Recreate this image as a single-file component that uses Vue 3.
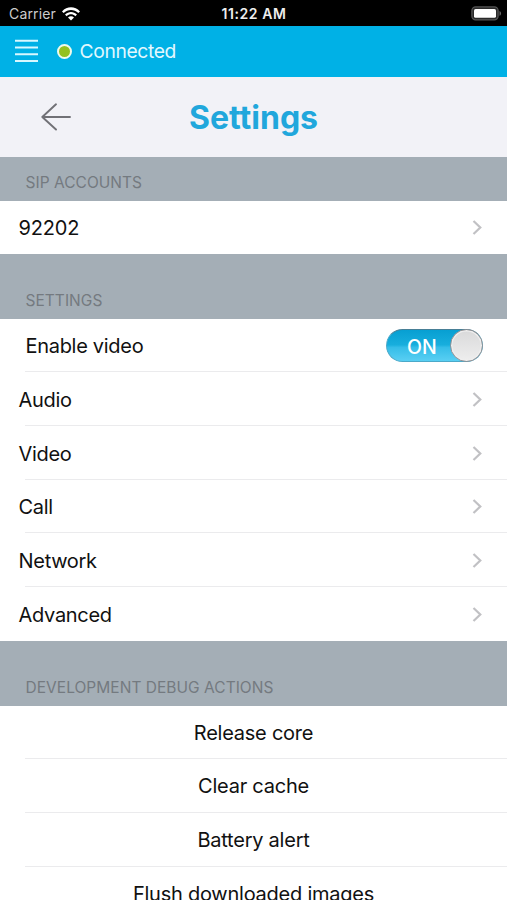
<script setup>
import { ref } from 'vue'

const videoEnabled = ref(true)
const accounts = ['92202']
const sections = ['Audio', 'Video', 'Call', 'Network', 'Advanced']
const actions = ['Release core', 'Clear cache', 'Battery alert', 'Flush downloaded images']
</script>

<template>
  <main class="phone">
    <div class="status">
      <div class="carrier">
        <span>Carrier</span>
        <svg class="wifi" width="18" height="14" viewBox="0 0 18 14">
          <path d="M0 4.4C5-1.2 13-1.2 18 4.4L16.3 6.1C12.2 1.8 5.8 1.8 1.7 6.1Z" />
          <path d="M3 7.5C6.4 4 11.6 4 15 7.5L13.3 9.2C10.7 6.7 7.3 6.7 4.7 9.2Z" />
          <path d="M6 10.5C7.8 8.9 10.2 8.9 12 10.5L9 13.6Z" />
        </svg>
      </div>
      <span class="time">11:22 AM</span>
      <svg class="battery" width="31" height="15" viewBox="0 0 31 15">
        <rect x="0.9" y="0.9" width="26.2" height="13" rx="3.8" fill="#2a2a2a" stroke="#555" stroke-width="1.3" />
        <rect x="3" y="3" width="22" height="8.8" rx="1.6" fill="#fff" />
        <path d="M28.5 5C30.6 5.8 30.6 9 28.5 9.8Z" fill="#666" />
      </svg>
    </div>

    <div class="connection">
      <svg class="menu" width="23" height="24" viewBox="0 0 23 24">
        <path d="M0 1.7H23M0 8.5H23M0 15.3H23M0 22.1H23" stroke="#d8f8ff" stroke-width="2" />
      </svg>
      <span class="dot"></span>
      <span class="state">Connected</span>
    </div>

    <header class="title-bar">
      <svg class="back" width="30" height="28" viewBox="0 0 30 28">
        <path d="M15 1.3L1.3 14L15 26.5M1.3 14H29" fill="none" stroke="#717176" stroke-width="1.9" stroke-linecap="round" stroke-linejoin="round" />
      </svg>
      <h1>Settings</h1>
    </header>

    <h2 class="group first">SIP ACCOUNTS</h2>
    <ul class="accounts">
      <li v-for="name in accounts" :key="name" class="row">
        <span class="label">{{ name }}</span>
        <svg class="chevron" width="10" height="15" viewBox="0 0 10 15"><path d="M1.5 1L8.3 7.5L1.5 14" /></svg>
      </li>
    </ul>

    <h2 class="group">SETTINGS</h2>
    <ul>
      <li class="row toggle-row">
        <span class="label">Enable video</span>
        <button class="switch" type="button" role="switch" :aria-checked="videoEnabled" @click="videoEnabled = !videoEnabled">
          <span class="on">{{ videoEnabled ? 'ON' : 'OFF' }}</span>
          <span class="knob"></span>
        </button>
      </li>
      <li v-for="name in sections" :key="name" class="row">
        <span class="label">{{ name }}</span>
        <svg class="chevron" width="10" height="15" viewBox="0 0 10 15"><path d="M1.5 1L8.3 7.5L1.5 14" /></svg>
      </li>
    </ul>

    <h2 class="group">DEVELOPMENT DEBUG ACTIONS</h2>
    <ul>
      <li v-for="name in actions" :key="name" class="row action">{{ name }}</li>
    </ul>
  </main>
</template>

<style>
body { margin: 0; overflow: hidden; }
</style>

<style scoped>
.phone {
  width: 507px;
  height: 900px;
  overflow: hidden;
  background: #fff;
  color: #111;
  font-family: Inter, Roboto, sans-serif;
  font-size: 20px;
}
.status {
  display: grid;
  grid-template-columns: 1fr auto 1fr;
  align-items: center;
  height: 25.5px;
  padding: 2px 5px 0 9px;
  box-sizing: border-box;
  background: #000;
  color: #eee;
  font-size: 14px;
}
.carrier { display: flex; align-items: center; gap: 6px; color: #ccc; letter-spacing: 0.15px; }
.wifi { fill: #fff; }
.time { font-weight: 600; font-size: 14px; letter-spacing: 0.6px; margin-left: -3px; }
.battery { justify-self: end; }
.connection {
  display: flex;
  align-items: center;
  height: 51.5px;
  padding-left: 15px;
  background: #00b1e6;
  color: #e2f8fe;
}
.dot {
  width: 11px;
  height: 11px;
  margin-left: 18.5px;
  border: 2px solid #effaeb;
  border-radius: 50%;
  background: #94c11f;
}
.state { margin-left: 8px; font-size: 19.3px; letter-spacing: -0.37px; }
.title-bar {
  display: grid;
  grid-template-columns: 1fr auto 1fr;
  align-items: center;
  height: 80px;
  background: #f2f2f7;
}
.back { margin-left: 41px; }
h1 { margin: 0; padding-top: 2px; font-size: 32px; line-height: 40px; font-weight: 700; color: #21a7dc; }
.group {
  display: flex;
  align-items: flex-end;
  height: 65px;
  margin: 0;
  padding: 0 25.5px 8px;
  box-sizing: border-box;
  background: #a4aeb6;
  color: #747a80;
  font-size: 15.5px;
  letter-spacing: 0.03px;
  line-height: 20px;
  font-weight: 400;
}
.group.first { height: 44px; }
ul { margin: 0; padding: 0; list-style: none; }
.row {
  display: flex;
  align-items: center;
  justify-content: space-between;
  height: 53.67px;
  padding: 0 25px 0 18.5px;
  box-sizing: border-box;
  background: linear-gradient(#ebebed, #ebebed) 25px 100% / 100% 1.3px no-repeat;
  letter-spacing: -0.3px;
}
.label { padding-top: 1px; }
.row:last-child { background: none; }
.accounts .row { height: 53px; letter-spacing: -0.15px; }
.accounts .label { padding-top: 0; }
.toggle-row { padding: 0 24px 0 25.5px; }
.toggle-row .label { padding-top: 0; }
.action { justify-content: center; padding: 0; letter-spacing: -0.24px; }
.chevron path { fill: none; stroke: #c1c1c4; stroke-width: 2.2; }
.switch {
  display: flex;
  align-items: center;
  justify-content: space-between;
  width: 97px;
  height: 33px;
  padding: 0 0 0 20px;
  box-sizing: border-box;
  border: 1px solid #4ba9c9;
  border-top-color: #477f96;
  border-radius: 17px;
  background: linear-gradient(#079fd2, #18aedd 48%, #35bde8 56%, #59cff3);
  color: #fff;
  font-family: inherit;
}
.on { padding-top: 2px; font-size: 19.5px; font-weight: 500; }
.knob {
  width: 33px;
  height: 33px;
  margin-right: -1px;
  box-sizing: border-box;
  border: 1.5px solid #929296;
  border-radius: 50%;
  box-shadow: inset 0 0 0 1.5px #eee;
  background: linear-gradient(#d9d9da, #eee);
}
</style>
